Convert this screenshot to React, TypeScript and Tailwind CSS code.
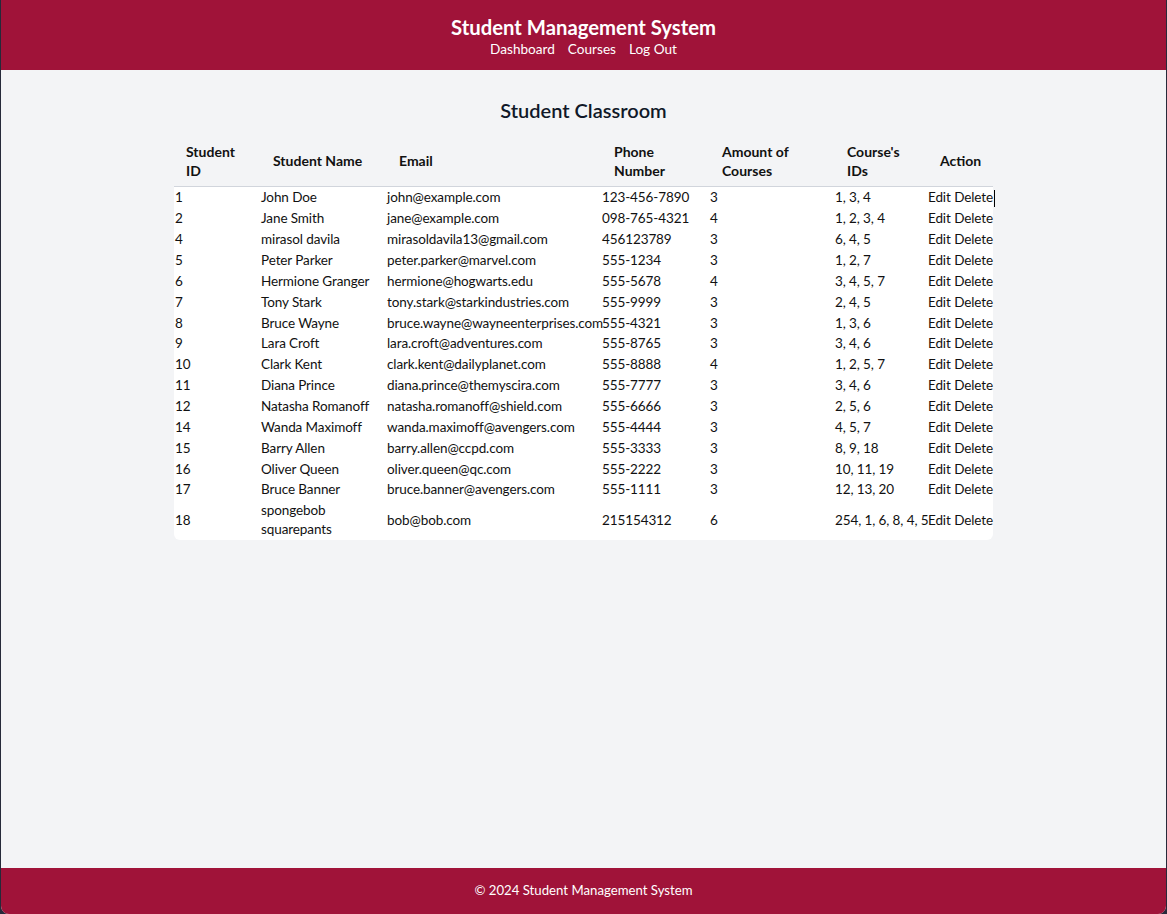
import React from "react";

type Student = {
  id: number;
  name: string;
  email: string;
  phone: string;
  amount: number;
  courses: string;
};

const students: Student[] = [
  { id: 1, name: "John Doe", email: "john@example.com", phone: "123-456-7890", amount: 3, courses: "1, 3, 4" },
  { id: 2, name: "Jane Smith", email: "jane@example.com", phone: "098-765-4321", amount: 4, courses: "1, 2, 3, 4" },
  { id: 4, name: "mirasol davila", email: "mirasoldavila13@gmail.com", phone: "456123789", amount: 3, courses: "6, 4, 5" },
  { id: 5, name: "Peter Parker", email: "peter.parker@marvel.com", phone: "555-1234", amount: 3, courses: "1, 2, 7" },
  { id: 6, name: "Hermione Granger", email: "hermione@hogwarts.edu", phone: "555-5678", amount: 4, courses: "3, 4, 5, 7" },
  { id: 7, name: "Tony Stark", email: "tony.stark@starkindustries.com", phone: "555-9999", amount: 3, courses: "2, 4, 5" },
  { id: 8, name: "Bruce Wayne", email: "bruce.wayne@wayneenterprises.com", phone: "555-4321", amount: 3, courses: "1, 3, 6" },
  { id: 9, name: "Lara Croft", email: "lara.croft@adventures.com", phone: "555-8765", amount: 3, courses: "3, 4, 6" },
  { id: 10, name: "Clark Kent", email: "clark.kent@dailyplanet.com", phone: "555-8888", amount: 4, courses: "1, 2, 5, 7" },
  { id: 11, name: "Diana Prince", email: "diana.prince@themyscira.com", phone: "555-7777", amount: 3, courses: "3, 4, 6" },
  { id: 12, name: "Natasha Romanoff", email: "natasha.romanoff@shield.com", phone: "555-6666", amount: 3, courses: "2, 5, 6" },
  { id: 14, name: "Wanda Maximoff", email: "wanda.maximoff@avengers.com", phone: "555-4444", amount: 3, courses: "4, 5, 7" },
  { id: 15, name: "Barry Allen", email: "barry.allen@ccpd.com", phone: "555-3333", amount: 3, courses: "8, 9, 18" },
  { id: 16, name: "Oliver Queen", email: "oliver.queen@qc.com", phone: "555-2222", amount: 3, courses: "10, 11, 19" },
  { id: 17, name: "Bruce Banner", email: "bruce.banner@avengers.com", phone: "555-1111", amount: 3, courses: "12, 13, 20" },
  { id: 18, name: "spongebob squarepants", email: "bob@bob.com", phone: "215154312", amount: 6, courses: "254, 1, 6, 8, 4, 5" },
];

function Header() {
  return (
    <header className="bg-[#a01339] text-white text-center pt-[15px] pb-[12px]">
      <h1 className="text-[20.3px] font-bold leading-[25px]">Student Management System</h1>
      <nav className="flex justify-center gap-[13px] text-[13.6px] leading-[18px]">
        <a href="#">Dashboard</a>
        <a href="#">Courses</a>
        <a href="#">Log Out</a>
      </nav>
    </header>
  );
}

function StudentTable() {
  const th = "px-3 py-1.5 text-left font-bold leading-[18.6px]";
  const td = "p-0 py-px leading-[18.86px] align-middle";
  return (
    <table className="w-[819px] mx-auto table-fixed border-collapse text-[14px] text-[#111]">
      <thead className="border-b border-gray-300">
        <tr>
          <th className={`${th} w-[87px]`}>Student ID</th>
          <th className={`${th} w-[126px]`}>Student Name</th>
          <th className={`${th} w-[215px]`}>Email</th>
          <th className={`${th} w-[108px]`}>Phone Number</th>
          <th className={`${th} w-[125px]`}>Amount of Courses</th>
          <th className={`${th} w-[93px]`}>Course's IDs</th>
          <th className={`${th} w-[65px]`}>Action</th>
        </tr>
      </thead>
      <tbody className="bg-white text-[13.5px] tracking-[-0.1px]">
        {students.map((s, i) => (
          <tr key={s.id}>
            <td className={`${td} pl-px ${i === students.length - 1 ? "rounded-bl-md" : ""}`}>{s.id}</td>
            <td className={td}>{s.name}</td>
            <td className={`${td} whitespace-nowrap`}>{s.email}</td>
            <td className={td}>{s.phone}</td>
            <td className={td}>{s.amount}</td>
            <td className={`${td} whitespace-nowrap`}>{s.courses}</td>
            <td className={`${td} whitespace-nowrap ${i === students.length - 1 ? "rounded-br-md" : ""}`}>
              <button className="cursor-pointer">Edit</button>{" "}
              <button className="cursor-pointer">Delete</button>
              {i === 0 && <span className="inline-block w-px h-[17px] bg-black align-middle ml-px" />}
            </td>
          </tr>
        ))}
      </tbody>
    </table>
  );
}

export default function App() {
  return (
    <div className="bg-[#262a3a] h-[914px]">
      <div
        className="h-[914px] flex flex-col mx-px rounded-b-[8px] overflow-hidden bg-gray-100"
        style={{ fontFamily: '"Segoe UI", Lato, "Noto Sans", sans-serif' }}
      >
        <Header />
        <main className="flex-1 pt-[27px]">
          <h2 className="text-center text-[20px] font-semibold leading-[26px] text-gray-900 mb-[14px]">
            Student Classroom
          </h2>
          <StudentTable />
        </main>
        <footer className="bg-[#a01339] text-white text-center text-[13.2px] h-[46px] flex items-center justify-center">
          © 2024 Student Management System
        </footer>
      </div>
    </div>
  );
}
